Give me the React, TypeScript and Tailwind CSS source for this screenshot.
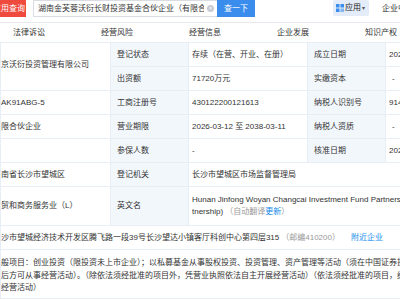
import React from "react";

const font = { fontFamily: '"Liberation Sans", "Noto Sans CJK SC", sans-serif' };

function Label({ children }: { children?: React.ReactNode }) {
  return (
    <td className="h-[24px] bg-[#f2f7fc] border border-[#e8eef5] pl-[6px] text-[#333] whitespace-nowrap overflow-hidden">
      {children}
    </td>
  );
}

function Val({ children, colSpan, rowSpan, className = "" }: { children?: React.ReactNode; colSpan?: number; rowSpan?: number; className?: string }) {
  return (
    <td
      colSpan={colSpan}
      rowSpan={rowSpan}
      className={`h-[24px] border border-[#e8eef5] pl-[3px] text-[#333] whitespace-nowrap overflow-hidden ${className}`}
    >
      {children}
    </td>
  );
}

function AppsIcon() {
  return (
    <svg width="8" height="8" viewBox="0 0 8 8" className="block shrink-0">
      <rect x="0" y="0" width="3.5" height="3.5" fill="#3b8ded" />
      <rect x="4.5" y="0" width="3.5" height="3.5" fill="#3b8ded" />
      <rect x="0" y="4.5" width="3.5" height="3.5" fill="#3b8ded" />
      <rect x="4.5" y="4.5" width="3.5" height="3.5" fill="#7fb6f4" />
    </svg>
  );
}

export default function App() {
  const tabs = ["法律诉讼", "经营风险", "经营信息", "企业发展", "知识产权"];

  return (
    <div className="w-[400px] h-[300px] overflow-hidden bg-white text-[8px] leading-[12px]" style={font}>
      {/* Top search bar */}
      <div className="flex items-start h-[22px]">
        <div className="w-[26px] h-[17px] shrink-0 bg-[#ee4a3d] text-white flex items-center justify-end overflow-hidden pr-[1px] whitespace-nowrap">
          信用查询
        </div>
        <div className="ml-[7px] w-[184px] h-[17px] shrink-0 border border-[#d9dde3] border-r-0 flex items-center pl-[4px] pr-[3px]">
          <span className="flex-1 min-w-0 overflow-hidden whitespace-nowrap text-[#333]">湖南金芙蓉沃衍长财投资基金合伙企业（有限合伙）</span>
          <span className="ml-[3px] w-[7px] h-[7px] rounded-full bg-[#c8ccd2] flex items-center justify-center text-white text-[5px] leading-none shrink-0">×</span>
        </div>
        <div className="w-[38px] h-[17px] shrink-0 bg-[#3b8ded] text-white flex items-center justify-center whitespace-nowrap">查一下</div>
        <div className="flex-1 flex items-start justify-end min-w-0">
          <div className="flex items-center h-[16px] w-[36px] pl-[3px] gap-[1px] bg-[#e3ecf8] rounded-[2px] text-[#222]">
            <AppsIcon />
            <span>应用</span>
            <span className="text-[#555] text-[6px] leading-none">▾</span>
          </div>
          <div className="ml-[13px] w-[18px] h-[17px] overflow-hidden flex items-center">
            <span className="whitespace-nowrap text-[#333]">企业中心</span>
          </div>
        </div>
      </div>

      {/* Tabs */}
      <div className="h-[21px] border-t border-b border-[#e6e9ee] flex items-center -ml-[15px] pt-[1px]">
        {tabs.map((t) => (
          <div key={t} className="w-[88px] shrink-0 text-center text-[#333]">
            {t}
          </div>
        ))}
      </div>

      {/* Info table */}
      <table className="table-fixed border-collapse w-[400px] -mt-[1px]">
        <colgroup>
          <col className="w-[110px]" />
          <col className="w-[78px]" />
          <col className="w-[119px]" />
          <col className="w-[78px]" />
          <col className="w-[15px]" />
        </colgroup>
        <tbody>
          <tr>
            <Val rowSpan={2} className="text-[#128bed] !pl-0 align-middle">
              <div className="-mt-[3px]">京沃衍投资管理有限公司</div>
            </Val>
            <Label>登记状态</Label>
            <Val>存续（在营、开业、在册）</Val>
            <Label>成立日期</Label>
            <Val>2026-03-12</Val>
          </tr>
          <tr>
            <Label>出资额</Label>
            <Val>71720万元</Val>
            <Label>实缴资本</Label>
            <Val className="!pl-[6px]">-</Val>
          </tr>
          <tr>
            <Val className="!pl-0">AK91ABG-5</Val>
            <Label>工商注册号</Label>
            <Val>430122200121613</Val>
            <Label>纳税人识别号</Label>
            <Val>91430100MAK91ABG-5</Val>
          </tr>
          <tr>
            <Val className="!pl-0">限合伙企业</Val>
            <Label>营业期限</Label>
            <Val>2026-03-12 至 2038-03-11</Val>
            <Label>纳税人资质</Label>
            <Val className="!pl-[6px]">-</Val>
          </tr>
          <tr>
            <Val />
            <Label>参保人数</Label>
            <Val>-</Val>
            <Label>核准日期</Label>
            <Val>2026-03-12</Val>
          </tr>
          <tr>
            <Val className="!pl-0">南省长沙市望城区</Val>
            <Label>登记机关</Label>
            <Val colSpan={3}>长沙市望城区市场监督管理局</Val>
          </tr>
          <tr>
            <Val className="!pl-0 h-[39px]">贸和商务服务业（L）</Val>
            <Label>英文名</Label>
            <Val colSpan={3} className="h-[39px] overflow-visible">
              <div className="whitespace-nowrap">Hunan Jinfong Woyan Changcai Investment Fund Partnership (Limited Par</div>
              <div className="whitespace-nowrap">
                tnership) <span className="text-[#999]">（自动翻译</span>
                <span className="text-[#128bed]">更新</span>
                <span className="text-[#999]">）</span>
              </div>
            </Val>
          </tr>
          <tr>
            <Val colSpan={5} className="!pl-0">
              沙市望城经济技术开发区腾飞路一段39号长沙望达小镇客厅科创中心第四层315
              <span className="text-[#999] ml-[2px]">（邮编410200）</span>
              <span className="text-[#128bed] ml-[11px]">附近企业</span>
            </Val>
          </tr>
          <tr>
            <Val colSpan={5} className="!pl-0 h-[49px] align-top">
              <div className="pt-[7px] leading-[12.5px]">
                <div>般项目：创业投资（限投资未上市企业）；以私募基金从事股权投资、投资管理、资产管理等活动（须在中国证券投资基金业协会完成登记备案</div>
                <div>后方可从事经营活动）。（除依法须经批准的项目外，凭营业执照依法自主开展经营活动）（依法须经批准的项目，经相关部门批准后方可开展</div>
                <div>经营活动）</div>
              </div>
            </Val>
          </tr>
        </tbody>
      </table>
    </div>
  );
}
